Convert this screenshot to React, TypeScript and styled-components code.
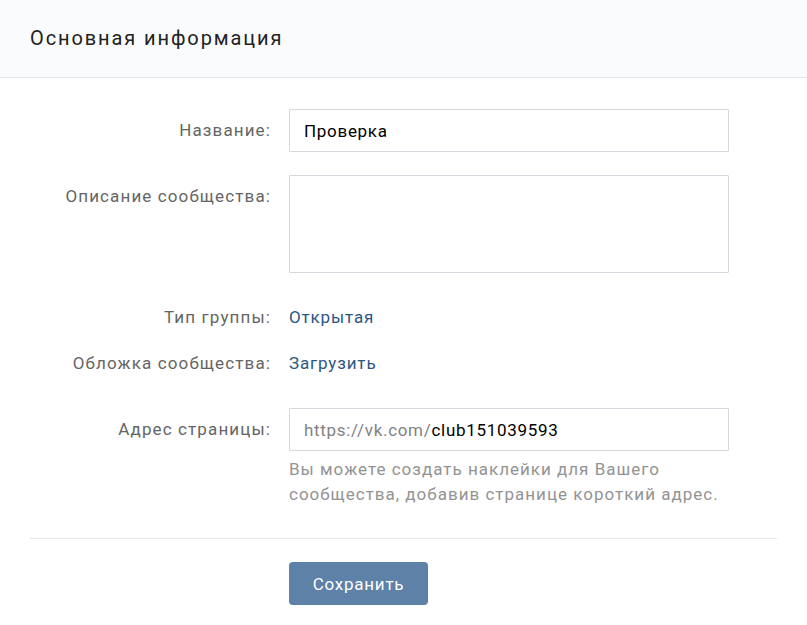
import React from "react";
import styled, { createGlobalStyle } from "styled-components";

const GlobalStyle = createGlobalStyle`
  * { box-sizing: border-box; }
  body {
    margin: 0;
    background: #fff;
    font-family: Roboto, "Liberation Sans", Arial, sans-serif;
    -webkit-font-smoothing: antialiased;
  }
`;

export default function App() {
    return (
        <>
            <GlobalStyle />
            <Page>
                <Header>
                    <Title>Основная информация</Title>
                </Header>
                <Body>
                    <Row>
                        <Label>Название:</Label>
                        <Field>
                            <Input>Проверка</Input>
                        </Field>
                    </Row>
                    <Row $gap={23}>
                        <Label>Описание сообщества:</Label>
                        <Field>
                            <TextArea />
                        </Field>
                    </Row>
                    <Row $gap={23}>
                        <Label>Тип группы:</Label>
                        <Field>
                            <Value>Открытая</Value>
                        </Field>
                    </Row>
                    <Row $gap={15}>
                        <Label>Обложка сообщества:</Label>
                        <Field>
                            <Value>Загрузить</Value>
                        </Field>
                    </Row>
                    <Row $gap={35}>
                        <Label>Адрес страницы:</Label>
                        <Field>
                            <Input>
                                <Prefix>https://vk.com/</Prefix>club151039593
                            </Input>
                            <Hint>
                                Вы можете создать наклейки для Вашего
                                <br />
                                сообщества, добавив странице короткий адрес.
                            </Hint>
                        </Field>
                    </Row>
                    <Separator />
                    <Footer>
                        <Button>Сохранить</Button>
                    </Footer>
                </Body>
            </Page>
        </>
    );
}

const Page = styled.div`
width: 807px;
height: 625px;
background: #fff;
`

const Header = styled.div`
height: 78px;
background: #fafbfc;
border-bottom: 1px solid #e7e8ec;
padding: 0 30px;
display: flex;
align-items: center;
`

const Title = styled.h1`
margin: 0 0 2px;
font-size: 20px;
font-weight: 400;
letter-spacing: 1.9px;
color: #222;
`

const Body = styled.div`
padding: 31px 30px 20px;
`

const Row = styled.div<{ $gap?: number }>`
display: grid;
grid-template-columns: 241px 440px;
column-gap: 18px;
margin-top: ${p => p.$gap ?? 0}px;
`

const Label = styled.div`
text-align: right;
padding-top: 11px;
line-height: 20px;
font-size: 17px;
letter-spacing: 1.12px;
color: #656565;
white-space: nowrap;
`

const Field = styled.div`
display: flex;
flex-direction: column;
`

const Input = styled.div`
height: 43px;
border: 1px solid #d3d9de;
border-radius: 1px;
padding: 0 14px;
display: flex;
align-items: center;
font-size: 17px;
letter-spacing: 0.7px;
color: #000;
background: #fff;
`

const Prefix = styled.span`
color: #828282;
`

const TextArea = styled.div`
height: 98px;
border: 1px solid #d3d9de;
border-radius: 1px;
background: #fff;
`

const Value = styled.div`
padding-top: 11px;
line-height: 20px;
font-size: 17px;
letter-spacing: 0.85px;
color: #2a5885;
`

const Hint = styled.div`
margin-top: 6px;
font-size: 17px;
letter-spacing: 1px;
line-height: 25px;
color: #939393;
white-space: nowrap;
`

const Separator = styled.div`
height: 1px;
background: #e7e8ec;
margin-top: 31px;
`

const Footer = styled.div`
padding-left: 259px;
padding-top: 23px;
`

const Button = styled.button`
width: 139px;
height: 43px;
border: 0;
border-radius: 4px;
background: #5e81a8;
color: #fff;
font-family: Roboto, "Liberation Sans", Arial, sans-serif;
font-size: 17px;
letter-spacing: 0.75px;
cursor: pointer;
`
